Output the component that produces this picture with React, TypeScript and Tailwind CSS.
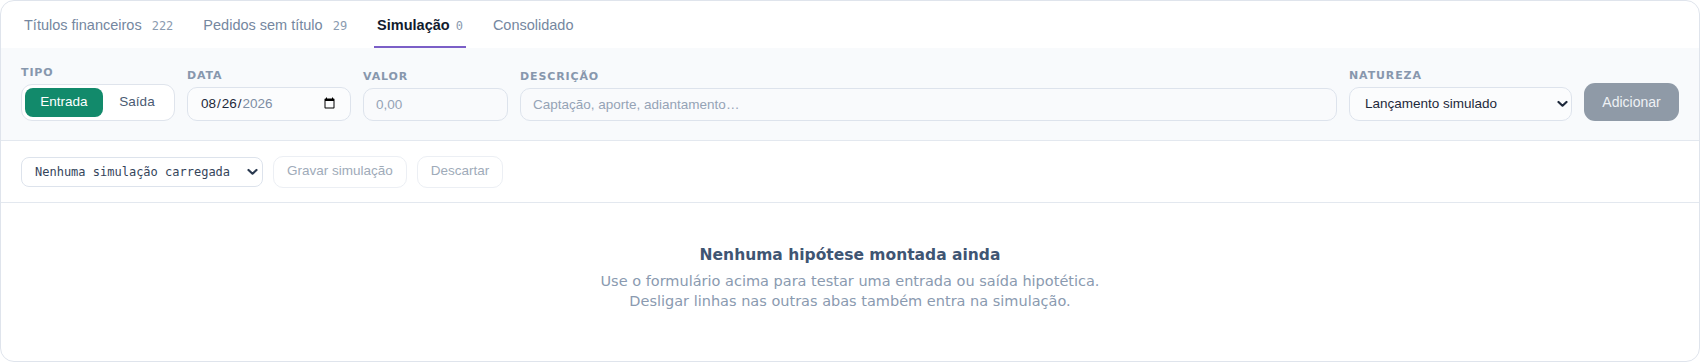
import React from 'react'

const SANS = "font-['Liberation_Sans',Arial,sans-serif]"

const TABS = [
  { label: 'Títulos financeiros', count: '222' },
  { label: 'Pedidos sem título', count: '29' },
  { label: 'Simulação', count: '0', active: true },
  { label: 'Consolidado' },
]

function Chevron({ className = '' }: { className?: string }) {
  return (
    <svg
      width="11"
      height="7"
      viewBox="0 0 11 7"
      fill="none"
      className={`pointer-events-none absolute top-1/2 -translate-y-1/2 ${className}`}
    >
      <path d="M1.5 1.5 5.5 5.2 9.5 1.5" stroke="currentColor" strokeWidth="2.2" strokeLinecap="round" strokeLinejoin="round" />
    </svg>
  )
}

function Field({ label, children, className = '' }: { label: string; children: React.ReactNode; className?: string }) {
  return (
    <div className={`flex flex-col gap-[5px] ${className}`}>
      <span className="font-['DejaVu_Sans',sans-serif] text-[11px] font-bold uppercase leading-[13px] tracking-[0.08em] text-[#8797ad]">
        {label}
      </span>
      {children}
    </div>
  )
}

export default function App() {
  return (
    <div className={`flex h-[362px] w-[1700px] flex-col overflow-hidden rounded-[14px] border border-[#dfe4ec] bg-white ${SANS}`}>
      {/* tabs */}
      <div className="flex h-[47px] shrink-0 gap-6 pl-5">
        {TABS.map((t) => (
          <div
            key={t.label}
            className={`flex items-center border-b-2 px-[3px] pt-[4px] ${t.active ? 'gap-1.5 border-[#7b5fc7]' : 'gap-2.5 border-transparent'}`}
          >
            <span className={`text-[14.5px] ${t.active ? 'font-bold text-[#111b2e]' : 'text-[#7587a0]'}`}>{t.label}</span>
            {t.count && (
              <span className="font-['DejaVu_Sans_Mono',monospace] text-[12px] text-[#8b9bb0]">{t.count}</span>
            )}
          </div>
        ))}
      </div>

      {/* form */}
      <div className="flex shrink-0 items-end gap-3 border-b border-[#e3e8ef] bg-[#f8fafc] px-5 pb-[19px] pt-[18px]">
        <Field label="Tipo">
          <div className="flex h-[37px] w-[154px] rounded-[11px] border border-[#dfe4ec] bg-white p-[3px] text-[13.5px]">
            <div className="flex w-[78px] items-center justify-center rounded-[8px] bg-[#128a6b] text-white">Entrada</div>
            <div className="flex flex-1 items-center justify-center text-[#4a5b72]">Saída</div>
          </div>
        </Field>
        <Field label="Data">
          <input
            type="date"
            defaultValue="2026-08-26"
            className="h-[34px] w-[164px] rounded-[10px] border border-[#dde3ec] bg-[#fbfcfd] px-3 text-[13.5px] text-[#1e293b] outline-none [&::-webkit-datetime-edit-year-field]:text-[#7e8ea4]"
          />
        </Field>
        <Field label="Valor">
          <input
            placeholder="0,00"
            className="h-[33px] w-[145px] rounded-[10px] border border-[#dde3ec] bg-[#f9fafc] px-3 text-[13.5px] outline-none placeholder:text-[#95a3b6]"
          />
        </Field>
        <Field label="Descrição" className="flex-1">
          <input
            placeholder="Captação, aporte, adiantamento…"
            className="h-[33px] w-full rounded-[10px] border border-[#dde3ec] bg-[#f9fafc] px-3 text-[13.5px] outline-none placeholder:text-[#95a3b6]"
          />
        </Field>
        <Field label="Natureza">
          <div className="relative w-[223px]">
            <select className="h-[34px] w-full appearance-none rounded-[10px] border border-[#dde3ec] bg-[#fbfcfd] pl-[15px] text-[13.5px] text-[#1e293b] outline-none">
              <option>Lançamento simulado</option>
            </select>
            <Chevron className="right-[4px] text-[#1e293b]" />
          </div>
        </Field>
        <button className="h-[38px] w-[95px] rounded-[11px] bg-[#8f9aa7] text-[14px] text-[#eef1f5]">Adicionar</button>
      </div>

      {/* toolbar */}
      <div className="flex h-[62px] shrink-0 items-center gap-2.5 border-b border-[#e3e8ef] px-5">
        <div className="relative w-[242px]">
          <select className="h-[30px] w-full appearance-none rounded-[8px] border border-[#dde3ec] bg-white pl-[13px] font-['DejaVu_Sans_Mono',monospace] text-[12px] text-[#34445a] outline-none">
            <option>Nenhuma simulação carregada</option>
          </select>
          <Chevron className="right-[5px] text-[#2b3a50]" />
        </div>
        <button className="h-[32px] w-[134px] rounded-[10px] border border-[#eceff4] bg-white text-[13.5px] text-[#a0abb9]">
          Gravar simulação
        </button>
        <button className="h-[32px] w-[86px] rounded-[10px] border border-[#eceff4] bg-white text-[13.5px] text-[#a0abb9]">
          Descartar
        </button>
      </div>

      {/* empty state */}
      <div className="flex flex-1 flex-col items-center pt-[41px] text-center font-['DejaVu_Sans',sans-serif]">
        <div className="text-[15.5px] font-bold leading-[22px] text-[#3f5573]">Nenhuma hipótese montada ainda</div>
        <p className="mt-[5px] text-[14.5px] leading-5 text-[#8a9ab0]">
          Use o formulário acima para testar uma entrada ou saída hipotética.
          <br />
          Desligar linhas nas outras abas também entra na simulação.
        </p>
      </div>
    </div>
  )
}
